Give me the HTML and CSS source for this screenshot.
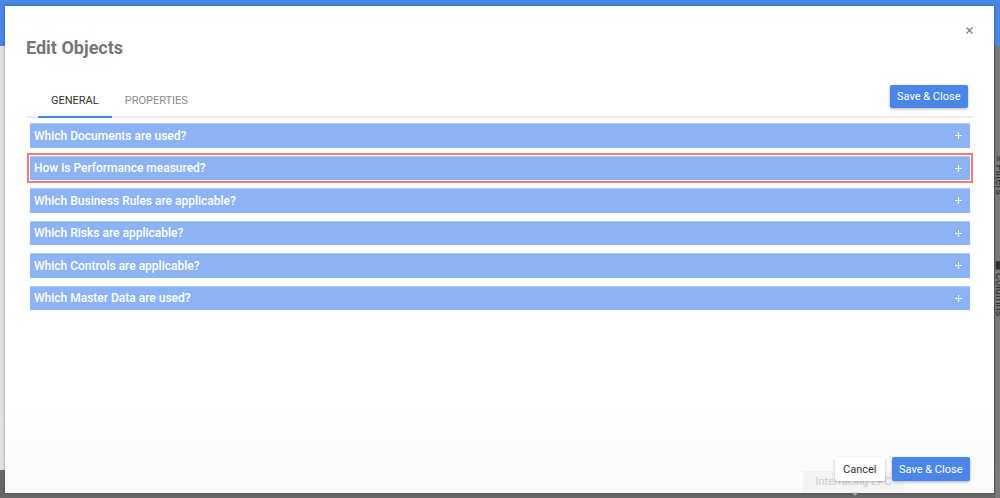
FILE: index.html
```html
<!DOCTYPE html>
<html lang="en">
<head>
<meta charset="utf-8">
<title>Edit Objects</title>
<link rel="stylesheet" href="styles.css">
</head>
<body>
<div class="backdrop">
  <div class="topbar"></div>
  <div class="workspace">
    <div class="leftpane"></div>
    <div class="centerpane"></div>
    <div class="sidebar">
      <div class="side-tab side-filters"><span class="side-icon">&#8801;</span> Filters</div>
      <div class="side-tab side-columns"><span class="side-icon">&#9638;</span> Columns</div>
    </div>
  </div>
</div>

<div class="modal">
  <svg class="close" width="7" height="7" viewBox="0 0 7 7"><path d="M0.5 0.5 L6.5 6.5 M6.5 0.5 L0.5 6.5" stroke="#7a7a7a" stroke-width="1.3" fill="none"/></svg>
  <div class="modal-header">
    <h1 class="title">Edit Objects</h1>
  </div>
  <div class="modal-body">
    <div class="tabrow">
      <div class="tabs">
        <div class="tab tab-active">GENERAL</div>
        <div class="tab">PROPERTIES</div>
      </div>
      <button class="btn btn-primary btn-top">Save &amp; Close</button>
    </div>
    <div class="accordion">
      <div class="acc-row"><span>Which Documents are used?</span><svg class="plus" width="7" height="7" viewBox="0 0 7 7"><path d="M3.5 0 V7 M0 3.5 H7" stroke="#fff" stroke-width="1" fill="none"/></svg></div>
      <div class="acc-row acc-focus"><span>How is Performance measured?</span><svg class="plus" width="7" height="7" viewBox="0 0 7 7"><path d="M3.5 0 V7 M0 3.5 H7" stroke="#fff" stroke-width="1" fill="none"/></svg></div>
      <div class="acc-row"><span>Which Business Rules are applicable?</span><svg class="plus" width="7" height="7" viewBox="0 0 7 7"><path d="M3.5 0 V7 M0 3.5 H7" stroke="#fff" stroke-width="1" fill="none"/></svg></div>
      <div class="acc-row"><span>Which Risks are applicable?</span><svg class="plus" width="7" height="7" viewBox="0 0 7 7"><path d="M3.5 0 V7 M0 3.5 H7" stroke="#fff" stroke-width="1" fill="none"/></svg></div>
      <div class="acc-row"><span>Which Controls are applicable?</span><svg class="plus" width="7" height="7" viewBox="0 0 7 7"><path d="M3.5 0 V7 M0 3.5 H7" stroke="#fff" stroke-width="1" fill="none"/></svg></div>
      <div class="acc-row"><span>Which Master Data are used?</span><svg class="plus" width="7" height="7" viewBox="0 0 7 7"><path d="M3.5 0 V7 M0 3.5 H7" stroke="#fff" stroke-width="1" fill="none"/></svg></div>
    </div>
  </div>
  <div class="modal-footer">
    <button class="btn btn-plain">Cancel</button>
    <button class="btn btn-primary">Save &amp; Close</button>
  </div>
  <div class="tooltip">Interfacing EPC</div>
</div>
</body>
</html>
```

FILE: styles.css
```css
* { box-sizing: border-box; }
html, body {
  margin: 0;
  padding: 0;
  width: 1000px;
  height: 498px;
  overflow: hidden;
  font-family: Roboto, "Liberation Sans", Arial, sans-serif;
}
.backdrop {
  width: 1000px;
  height: 498px;
  display: flex;
  flex-direction: column;
  background: #686868;
}
.topbar {
  height: 46px;
  background: #4a86e4;
  flex: none;
}
.workspace {
  flex: 1;
  display: flex;
}
.leftpane {
  width: 5px;
  height: 424px;
  background: #e2e2e2;
}
.centerpane { flex: 1; }
.sidebar {
  width: 20px;
  margin-right: -14px;
  background: #7b7b7b;
  border-left: 1px solid #5e5e5e;
  overflow: hidden;
}
.side-tab {
  writing-mode: vertical-rl;
  font-size: 11px;
  color: #2e2e2e;
  line-height: 14px;
  margin-left: -3px;
  white-space: nowrap;
}
.side-filters { margin-top: 110px; }
.side-columns { margin-top: 64px; }
.side-icon { font-size: 10px; font-weight: 700; }

.modal {
  position: absolute;
  left: 5px;
  top: 6px;
  width: 989px;
  height: 487px;
  background: linear-gradient(#fff 0, #fff 82%, #fafafa 100%);
  box-shadow: 0 0 3px rgba(0,0,0,0.35);
  display: flex;
  flex-direction: column;
}
.close {
  position: absolute;
  right: 21px;
  top: 21px;
}
.modal-header {
  padding: 31px 21px 0 21px;
}
.title {
  margin: 0;
  font-size: 18px;
  line-height: 22px;
  font-weight: 700;
  color: #767676;
}
.modal-body {
  padding: 0 21px;
}
.tabrow {
  margin-top: 26px;
  display: flex;
  align-items: flex-start;
  border-bottom: 2px solid #eeeeee;
}
.tabs {
  display: flex;
  margin-left: 12px;
  margin-bottom: -2px;
}
.tab {
  padding: 9px 13px 8px 13px;
  font-size: 11px;
  line-height: 14px;
  color: #8a8a8a;
  border-bottom: 2px solid transparent;
}
.tab-active {
  color: #2f2f2f;
  border-bottom-color: #4a86e8;
}
.btn {
  font-family: Roboto, "Liberation Sans", Arial, sans-serif;
  font-size: 11px;
  height: 24px;
  border: none;
  border-radius: 2px;
  padding: 0 7.5px;
  cursor: pointer;
  position: relative;
  z-index: 2;
}
.btn-primary {
  background: #4a86e8;
  color: #fff;
  box-shadow: 0 1px 3px rgba(0,0,0,0.3);
}
.btn-top {
  height: 23px;
  margin-left: auto;
  margin-right: 5px;
}
.btn-plain {
  background: #fff;
  color: #333;
  box-shadow: 0 1px 3px rgba(0,0,0,0.25);
  padding: 0 8px;
}
.accordion {
  margin-top: 5px;
  padding: 0 3px 0 4px;
  display: flex;
  flex-direction: column;
  gap: 8px;
}
.acc-row {
  height: 24.5px;
  background: #8cb4f5;
  border-top: 1px solid #a9c8f8;
  display: flex;
  align-items: center;
  justify-content: space-between;
  padding: 0 8px 0 4px;
  color: #fff;
  font-size: 12px;
  font-weight: 500;
}
.acc-focus {
  outline: 2px solid #f37a78;
  outline-offset: 1px;
}
.plus { flex: none; }
.modal-footer {
  margin-top: auto;
  display: flex;
  justify-content: flex-end;
  gap: 7px;
  padding: 0 24px 12px 0;
}
.tooltip {
  position: absolute;
  left: 798px;
  top: 465px;
  width: 101px;
  height: 21px;
  background: rgba(236,236,236,0.55);
  color: #cfcfcf;
  font-size: 11px;
  line-height: 21px;
  text-align: center;
  z-index: 1;
}
.tooltip::after {
  content: "";
  position: absolute;
  left: 48px;
  bottom: -4px;
  border-left: 4px solid transparent;
  border-right: 4px solid transparent;
  border-top: 4px solid rgba(200,200,200,0.6);
}
```
